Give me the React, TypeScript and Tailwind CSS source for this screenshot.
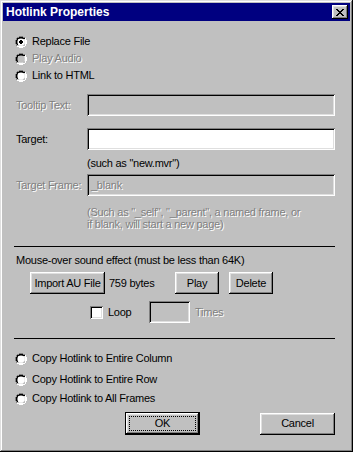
import React from "react";

const raised =
  "shadow-[inset_-1px_-1px_#000,inset_1px_1px_#fff,inset_-2px_-2px_#808080,inset_2px_2px_#dfdfdf]";
const sunken =
  "shadow-[inset_1px_1px_#808080,inset_-1px_-1px_#fff,inset_2px_2px_#000,inset_-2px_-2px_#dfdfdf]";
const dim = "text-[#808080] [text-shadow:1px_1px_0_#fff]";

function Radio({ checked = false, disabled = false }: { checked?: boolean; disabled?: boolean }) {
  return (
    <svg width="12" height="12" viewBox="0 0 12 12" className="shrink-0">
      <path d="M4 0h4v1h2v1h-8v-1h2z M0 4h1v-2h1v8h-1v-2h-1z" fill="#808080" />
      <path d="M4 1h4v1h2v1h-8v-1h2z M1 4h1v-1h1v6h-1v-1h-1z" fill="#000" />
      <path d="M10 2h1v2h1v4h-1v2h-1v1h-2v1h-4v-1h-2v-1h8z" fill="#fff" />
      <path d="M9 3h1v5h-1v1h-1v1h-4v-1h5z" fill="#dfdfdf" />
      <circle cx="6" cy="6" r="3.6" fill={disabled ? "#c0c0c0" : "#fff"} />
      {checked && <path d="M5 4h2v1h1v2h-1v1h-2v-1h-1v-2h1z" fill="#000" />}
    </svg>
  );
}

function Btn({ label, w, def = false }: { label: string; w: string; def?: boolean }) {
  if (def) {
    return (
      <div className={`${w} h-[23px] border border-black bg-[#c0c0c0] flex`}>
        <div className={`flex-1 ${raised} p-[3px] flex`}>
          <div className="flex-1 border border-dotted border-black flex items-center justify-center">
            {label}
          </div>
        </div>
      </div>
    );
  }
  return (
    <div className={`${w} h-[22px] bg-[#c0c0c0] ${raised} flex items-center justify-center`}>
      {label}
    </div>
  );
}

export default function App() {
  return (
    <div
      className="w-[353px] h-[452px] bg-[#c0c0c0] p-[3px] flex flex-col text-[11px] tracking-[-0.25px] text-black shadow-[inset_-1px_-1px_#000,inset_1px_1px_#dfdfdf,inset_-2px_-2px_#808080,inset_2px_2px_#fff]"
      style={{ fontFamily: '"Liberation Sans", Arial, sans-serif' }}
    >
      <div className="h-[18px] bg-[#000080] flex items-center justify-between pl-[3px] pr-[2px]">
        <span className="text-white font-bold text-[12px] tracking-normal">Hotlink Properties</span>
        <div className={`w-[16px] h-[14px] bg-[#c0c0c0] ${raised} flex items-center justify-center`}>
          <svg width="8" height="7" viewBox="0 0 8 7">
            <path d="M0 0h2v1h1v1h2v-1h1v-1h2v1h-1v1h-1v1h-1v1h1v1h1v1h1v1h-2v-1h-1v-1h-2v1h-1v1h-2v-1h1v-1h1v-1h1v-1h-1v-1h-1v-1h-1z" fill="#000" />
          </svg>
        </div>
      </div>

      <div className="flex flex-col pl-[12px] pt-[12px]">
        <div className="h-[17px] flex items-center gap-[5px]">
          <Radio checked />
          <span>Replace File</span>
        </div>
        <div className="h-[17px] flex items-center gap-[5px]">
          <Radio disabled />
          <span className={dim}>Play Audio</span>
        </div>
        <div className="h-[17px] flex items-center gap-[5px]">
          <Radio />
          <span>Link to HTML</span>
        </div>
      </div>

      <div className="flex items-center mt-[10px] pl-[13px]">
        <span className={`w-[71px] ${dim}`}>Tooltip Text:</span>
        <div className={`w-[248px] h-[22px] bg-[#c0c0c0] ${sunken}`} />
      </div>

      <div className="flex items-center mt-[12px] pl-[13px]">
        <span className="w-[71px]">Target:</span>
        <div className={`w-[248px] h-[22px] bg-white ${sunken}`} />
      </div>
      <div className="h-[14px] flex items-center mt-[6px] pl-[84px]">(such as "new.mvr")</div>

      <div className="flex items-center mt-[4px] pl-[13px]">
        <span className={`w-[71px] ${dim}`}>Target Frame:</span>
        <div className={`w-[248px] h-[22px] bg-[#c0c0c0] ${sunken} flex items-center pl-[4px]`}>
          <span className={dim}>_blank</span>
        </div>
      </div>
      <div className={`mt-[10px] pl-[84px] leading-[12px] ${dim}`}>
        <div>(Such as "_self", "_parent", a named frame, or</div>
        <div>if blank, will start a new page)</div>
      </div>

      <div className="mt-[16px] ml-[11px] w-[321px] h-px bg-black" />

      <div className="h-[14px] flex items-center mt-[6px] pl-[13px]">
        Mouse-over sound effect (must be less than 64K)
      </div>

      <div className="flex items-center mt-[5px] pl-[27px]">
        <Btn label="Import AU File" w="w-[75px]" />
        <span className="ml-[4px] w-[66px]">759 bytes</span>
        <Btn label="Play" w="w-[44px]" />
        <div className="w-[10px]" />
        <Btn label="Delete" w="w-[44px]" />
      </div>

      <div className="flex items-center mt-[7px] pl-[87px]">
        <div className={`w-[13px] h-[13px] bg-white ${sunken}`} />
        <span className="ml-[5px] w-[41px]">Loop</span>
        <div className={`w-[41px] h-[22px] bg-[#c0c0c0] ${sunken}`} />
        <span className={`ml-[5px] ${dim}`}>Times</span>
      </div>

      <div className="mt-[15px] ml-[11px] w-[321px] h-px bg-black" />

      <div className="flex flex-col pl-[12px] mt-[10px]">
        <div className="h-[19px] flex items-center gap-[5px]">
          <Radio />
          <span>Copy Hotlink to Entire Column</span>
        </div>
        <div className="h-[19px] flex items-center gap-[5px] mt-[2px]">
          <Radio />
          <span>Copy Hotlink to Entire Row</span>
        </div>
        <div className="h-[19px] flex items-center gap-[5px]">
          <Radio />
          <span>Copy Hotlink to All Frames</span>
        </div>
      </div>

      <div className="flex items-center mt-[4px] pl-[122px]">
        <Btn label="OK" w="w-[75px]" def />
        <div className="w-[60px]" />
        <Btn label="Cancel" w="w-[75px]" />
      </div>
    </div>
  );
}
